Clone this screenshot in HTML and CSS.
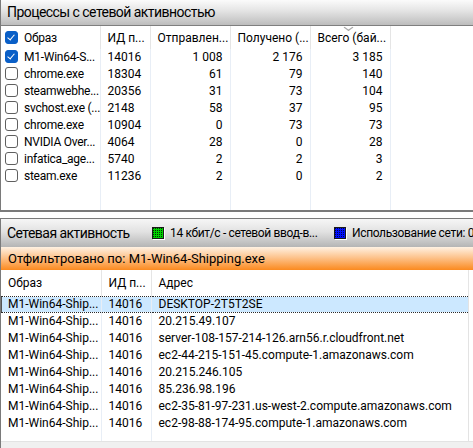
FILE: index.html
```html
<!DOCTYPE html>
<html lang="ru">
<head>
<meta charset="utf-8">
<title>Сеть</title>
<link rel="stylesheet" href="styles.css">
</head>
<body>
<div class="panel panel-proc">
  <div class="bar">Процессы с сетевой активностью</div>
  <div class="grid-wrap">
    <table class="grid">
      <colgroup><col class="c-img"><col class="c-pid"><col class="c-num"><col class="c-num"><col class="c-num"><col></colgroup>
      <thead>
        <tr>
          <th class="img"><span class="cb on"></span>Образ</th>
          <th>ИД п...</th>
          <th>Отправлен...</th>
          <th>Получено (...</th>
          <th class="sorted">Всего (бай...</th>
          <th class="fill"></th>
        </tr>
      </thead>
      <tbody>
        <tr><td class="img"><span class="cb on"></span>M1-Win64-S...</td><td>14016</td><td class="n">1 008</td><td class="n">2 176</td><td class="n">3 185</td><td></td></tr>
        <tr><td class="img"><span class="cb"></span>chrome.exe</td><td>18304</td><td class="n">61</td><td class="n">79</td><td class="n">140</td><td></td></tr>
        <tr><td class="img"><span class="cb"></span>steamwebhe...</td><td>20356</td><td class="n">31</td><td class="n">73</td><td class="n">104</td><td></td></tr>
        <tr><td class="img"><span class="cb"></span>svchost.exe (...</td><td>2148</td><td class="n">58</td><td class="n">37</td><td class="n">95</td><td></td></tr>
        <tr><td class="img"><span class="cb"></span>chrome.exe</td><td>10904</td><td class="n">0</td><td class="n">73</td><td class="n">73</td><td></td></tr>
        <tr><td class="img"><span class="cb"></span>NVIDIA Over...</td><td>4064</td><td class="n">28</td><td class="n">0</td><td class="n">28</td><td></td></tr>
        <tr><td class="img"><span class="cb"></span>infatica_age...</td><td>5740</td><td class="n">2</td><td class="n">2</td><td class="n">3</td><td></td></tr>
        <tr><td class="img"><span class="cb"></span>steam.exe</td><td>11236</td><td class="n">2</td><td class="n">0</td><td class="n">2</td><td></td></tr>
        <tr class="rest"><td></td><td></td><td></td><td></td><td></td><td></td></tr>
      </tbody>
    </table>
  </div>
</div>

<div class="panel panel-net">
  <div class="bar bar-net">
    <span class="bar-title">Сетевая активность</span>
    <span class="legend first"><span class="swatch green"></span>14 кбит/с - сетевой ввод-в...</span>
    <span class="legend"><span class="swatch blue"></span>Использование сети: 0%</span>
  </div>
  <div class="filter">Отфильтровано по: M1-Win64-Shipping.exe</div>
  <div class="list-wrap">
    <table class="grid list">
      <colgroup><col class="c-img"><col class="c-pid"><col></colgroup>
      <thead>
        <tr><th class="plain">Образ</th><th>ИД п...</th><th>Адрес</th></tr>
      </thead>
      <tbody>
        <tr class="sel"><td>M1-Win64-Ship...</td><td>14016</td><td>DESKTOP-2T5T2SE</td></tr>
        <tr><td>M1-Win64-Ship...</td><td>14016</td><td>20.215.49.107</td></tr>
        <tr><td>M1-Win64-Ship...</td><td>14016</td><td>server-108-157-214-126.arn56.r.cloudfront.net</td></tr>
        <tr><td>M1-Win64-Ship...</td><td>14016</td><td>ec2-44-215-151-45.compute-1.amazonaws.com</td></tr>
        <tr><td>M1-Win64-Ship...</td><td>14016</td><td>20.215.246.105</td></tr>
        <tr><td>M1-Win64-Ship...</td><td>14016</td><td>85.236.98.196</td></tr>
        <tr><td>M1-Win64-Ship...</td><td>14016</td><td>ec2-35-81-97-231.us-west-2.compute.amazonaws.com</td></tr>
        <tr><td>M1-Win64-Ship...</td><td>14016</td><td>ec2-98-88-174-95.compute-1.amazonaws.com</td></tr>
        <tr class="rest"><td></td><td></td><td></td></tr>
      </tbody>
    </table>
  </div>
  <div class="status"></div>
</div>
</body>
</html>
```

FILE: styles.css
```css
html, body {
  margin: 0;
  padding: 0;
  background: #ffffff;
}

body {
  width: 473px;
  height: 448px;
  overflow: hidden;
  font-family: "Segoe UI", Roboto, "Noto Sans", sans-serif;
  font-size: 12px;
  color: #000;
}

/* ---- panels ---- */
.panel {
  border-left: 1px solid #7a7a7a;
  box-sizing: border-box;
}

.panel-proc {
  height: 212px;
  border-bottom: 2px solid #7a7a7a;
  display: flex;
  flex-direction: column;
}

.panel-net {
  margin-top: 6px;
  border-top: 1px solid #7a7a7a;
  height: 230px;
  display: flex;
  flex-direction: column;
}

/* gradient caption bars */
.bar {
  height: 25px;
  flex: none;
  border-bottom: 1px solid #7f7f7f;
  background: linear-gradient(#fbfbfb, #e6e6e6 40%, #bdbdbd);
  font-size: 14px;
  letter-spacing: -0.55px;
  line-height: 25px;
  padding-left: 6px;
  white-space: nowrap;
  overflow: hidden;
}

.bar-net {
  height: 28px;
  line-height: 28px;
  display: flex;
  align-items: center;
  border-bottom: none;
  background: linear-gradient(#f6f6f6, #e2e2e2 45%, #b5b5b5);
}

.bar-title {
  width: 145px;
  flex: none;
}

.legend {
  display: flex;
  align-items: center;
  font-size: 12px;
  letter-spacing: -0.35px;
  flex: none;
}

.legend.first {
  width: 182px;
}

.swatch {
  width: 10px;
  height: 10px;
  border: 1px solid #1a1a1a;
  box-shadow: 1px 1px 0 #ffffff;
  margin-right: 6px;
  background-size: 2px 2px;
}

.swatch.green {
  background-color: #00d200;
  background-image: radial-gradient(circle at 0.5px 0.5px, #003000 0.6px, transparent 0.9px);
}

.swatch.blue {
  background-color: #0010ff;
  background-image: radial-gradient(circle at 0.5px 0.5px, #000050 0.6px, transparent 0.9px);
}

.filter {
  height: 23px;
  flex: none;
  line-height: 23px;
  padding-left: 7px;
  font-size: 13px;
  background: linear-gradient(#fff1e2, #fdc48e 45%, #fb8a1f);
}

/* ---- grids ---- */
.grid-wrap, .list-wrap {
  flex: 1;
  overflow: hidden;
}

.grid {
  border-collapse: collapse;
  table-layout: fixed;
  width: 100%;
  height: 100%;
}

.c-img { width: 99px; }
.c-pid { width: 50px; }
.c-num { width: 80px; }

.grid th, .grid td {
  padding: 0 7px;
  white-space: nowrap;
  overflow: hidden;
  text-align: left;
  font-weight: normal;
  border-right: 1px solid #e8eef6;
}

.grid th {
  height: 23px;
  border-right-color: #e5e5e5;
  position: relative;
}

.grid td {
  height: 17px;
  line-height: 17px;
}

.grid tr.rest td {
  height: auto;
}

.grid td.n {
  text-align: right;
}

.grid .img {
  padding-left: 4px;
  padding-right: 0;
  letter-spacing: -0.25px;
}

.grid th.fill, .grid td:last-child {
  border-right: none;
}

/* sort glyph above the column caption */
.sorted::before {
  content: "";
  position: absolute;
  top: -1px;
  left: 35px;
  width: 4px;
  height: 4px;
  border-right: 1px solid #a8a8a8;
  border-bottom: 1px solid #a8a8a8;
  transform: scaleX(1.4) rotate(45deg);
}

/* checkboxes */
.cb {
  display: inline-block;
  box-sizing: border-box;
  width: 13px;
  height: 13px;
  border: 1px solid #5f5f5f;
  border-radius: 3px;
  background: #fff;
  vertical-align: -2px;
  margin-right: 6px;
  position: relative;
}

.cb.on {
  background: #0a5fc7;
  border-color: #0a5fc7;
}

.cb.on::after {
  content: "";
  position: absolute;
  left: 3px;
  top: 1px;
  width: 3px;
  height: 6px;
  border-right: 1px solid #fff;
  border-bottom: 1px solid #fff;
  transform: rotate(40deg);
}

/* bottom list */
.list-wrap {
  border-bottom: 1px solid #e3e3e3;
}

.list {
  width: 468px;
  border-right: 1px solid #e3e3e3;
}

.list th {
  height: 26px;
}

.list th.plain {
  padding-left: 7px;
}

.list td:first-child {
  padding-left: 7px;
  padding-right: 1px;
}

.list .c-img { width: 100px; }

.list tr.sel td {
  background: #cce8ff;
  border-top: 1px dotted #2b2b2b;
  border-bottom: 1px dotted #2b2b2b;
  line-height: 15px;
  height: 15px;
}

.list tr.sel td:first-child {
  box-shadow: inset 1px 0 0 #555;
}

.status {
  height: 6px;
  flex: none;
  background: #f0f0f0;
}
```
